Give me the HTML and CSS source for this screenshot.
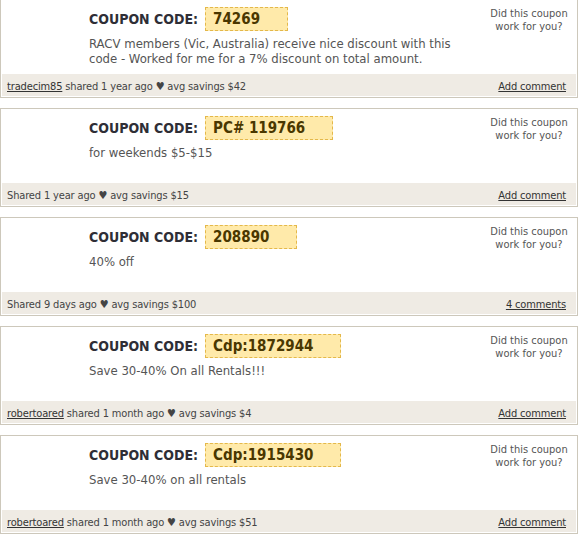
FILE: index.html
```html
<!DOCTYPE html>
<html>
<head>
<meta charset="utf-8">
<link rel="stylesheet" href="styles.css">
</head>
<body>
<div class="list">
  <div class="card">
    <div class="card-body">
      <div class="main">
        <div class="code-row"><span class="label">COUPON CODE:</span><span class="code">74269</span></div>
        <p class="desc">RACV members (Vic, Australia) receive nice discount with this code - Worked for me for a 7% discount on total amount.</p>
      </div>
      <div class="vote">Did this coupon<br>work for you?</div>
    </div>
    <div class="card-foot">
      <span class="meta"><a href="#" class="user">tradecim85</a> shared 1 year ago ♥ avg savings $42</span>
      <a href="#" class="comments">Add comment</a>
    </div>
  </div>

  <div class="card">
    <div class="card-body">
      <div class="main">
        <div class="code-row"><span class="label">COUPON CODE:</span><span class="code">PC# 119766</span></div>
        <p class="desc">for weekends $5-$15</p>
      </div>
      <div class="vote">Did this coupon<br>work for you?</div>
    </div>
    <div class="card-foot">
      <span class="meta">Shared 1 year ago ♥ avg savings $15</span>
      <a href="#" class="comments">Add comment</a>
    </div>
  </div>

  <div class="card">
    <div class="card-body">
      <div class="main">
        <div class="code-row"><span class="label">COUPON CODE:</span><span class="code">208890</span></div>
        <p class="desc">40% off</p>
      </div>
      <div class="vote">Did this coupon<br>work for you?</div>
    </div>
    <div class="card-foot">
      <span class="meta">Shared 9 days ago ♥ avg savings $100</span>
      <a href="#" class="comments">4 comments</a>
    </div>
  </div>

  <div class="card">
    <div class="card-body">
      <div class="main">
        <div class="code-row"><span class="label">COUPON CODE:</span><span class="code">Cdp:1872944</span></div>
        <p class="desc">Save 30-40% On all Rentals!!!</p>
      </div>
      <div class="vote">Did this coupon<br>work for you?</div>
    </div>
    <div class="card-foot">
      <span class="meta"><a href="#" class="user">robertoared</a> shared 1 month ago ♥ avg savings $4</span>
      <a href="#" class="comments">Add comment</a>
    </div>
  </div>

  <div class="card">
    <div class="card-body">
      <div class="main">
        <div class="code-row"><span class="label">COUPON CODE:</span><span class="code">Cdp:1915430</span></div>
        <p class="desc">Save 30-40% on all rentals</p>
      </div>
      <div class="vote">Did this coupon<br>work for you?</div>
    </div>
    <div class="card-foot">
      <span class="meta"><a href="#" class="user">robertoared</a> shared 1 month ago ♥ avg savings $51</span>
      <a href="#" class="comments">Add comment</a>
    </div>
  </div>
</div>
</body>
</html>
```

FILE: styles.css
```css
html, body {
  margin: 0;
  padding: 0;
  background: #fff;
}
body {
  font-family: "DejaVu Sans Condensed", "DejaVu Sans", sans-serif;
  color: #444;
}
.list {
  width: 578px;
  margin-top: -1px;
  display: flex;
  flex-direction: column;
  gap: 10px;
}
.card {
  border: 1px solid #cdc8bb;
  padding: 1px;
  background: #fff;
}
.card-body {
  height: 73px;
  display: flex;
  padding-left: 87px;
  box-sizing: border-box;
}
.main {
  flex: 1;
  padding-top: 6px;
}
.code-row {
  display: flex;
  align-items: baseline;
  gap: 7px;
}
.label {
  font-size: 14px;
  font-weight: bold;
  color: #2e2e36;
}
.code {
  font-size: 15px;
  font-weight: bold;
  color: #4a3700;
  background: #ffeaaa;
  border: 1px dashed #e4b84a;
  padding: 0 27px 0 7px;
  line-height: 22px;
}
.desc {
  margin: 5px 0 0;
  font-size: 13px;
  line-height: 15px;
  color: #555;
  max-width: 380px;
}
.vote {
  width: 90px;
  margin-right: 2px;
  padding-top: 6px;
  text-align: center;
  font-size: 11px;
  line-height: 13px;
  color: #555;
}
.card-foot {
  height: 22px;
  box-sizing: border-box;
  background: #efebe4;
  display: flex;
  justify-content: space-between;
  align-items: center;
  padding: 2px 10px 0 5px;
  font-size: 11px;
  letter-spacing: -0.15px;
  color: #444;
}
.card-foot a {
  color: #333;
  text-decoration: underline;
}
```
